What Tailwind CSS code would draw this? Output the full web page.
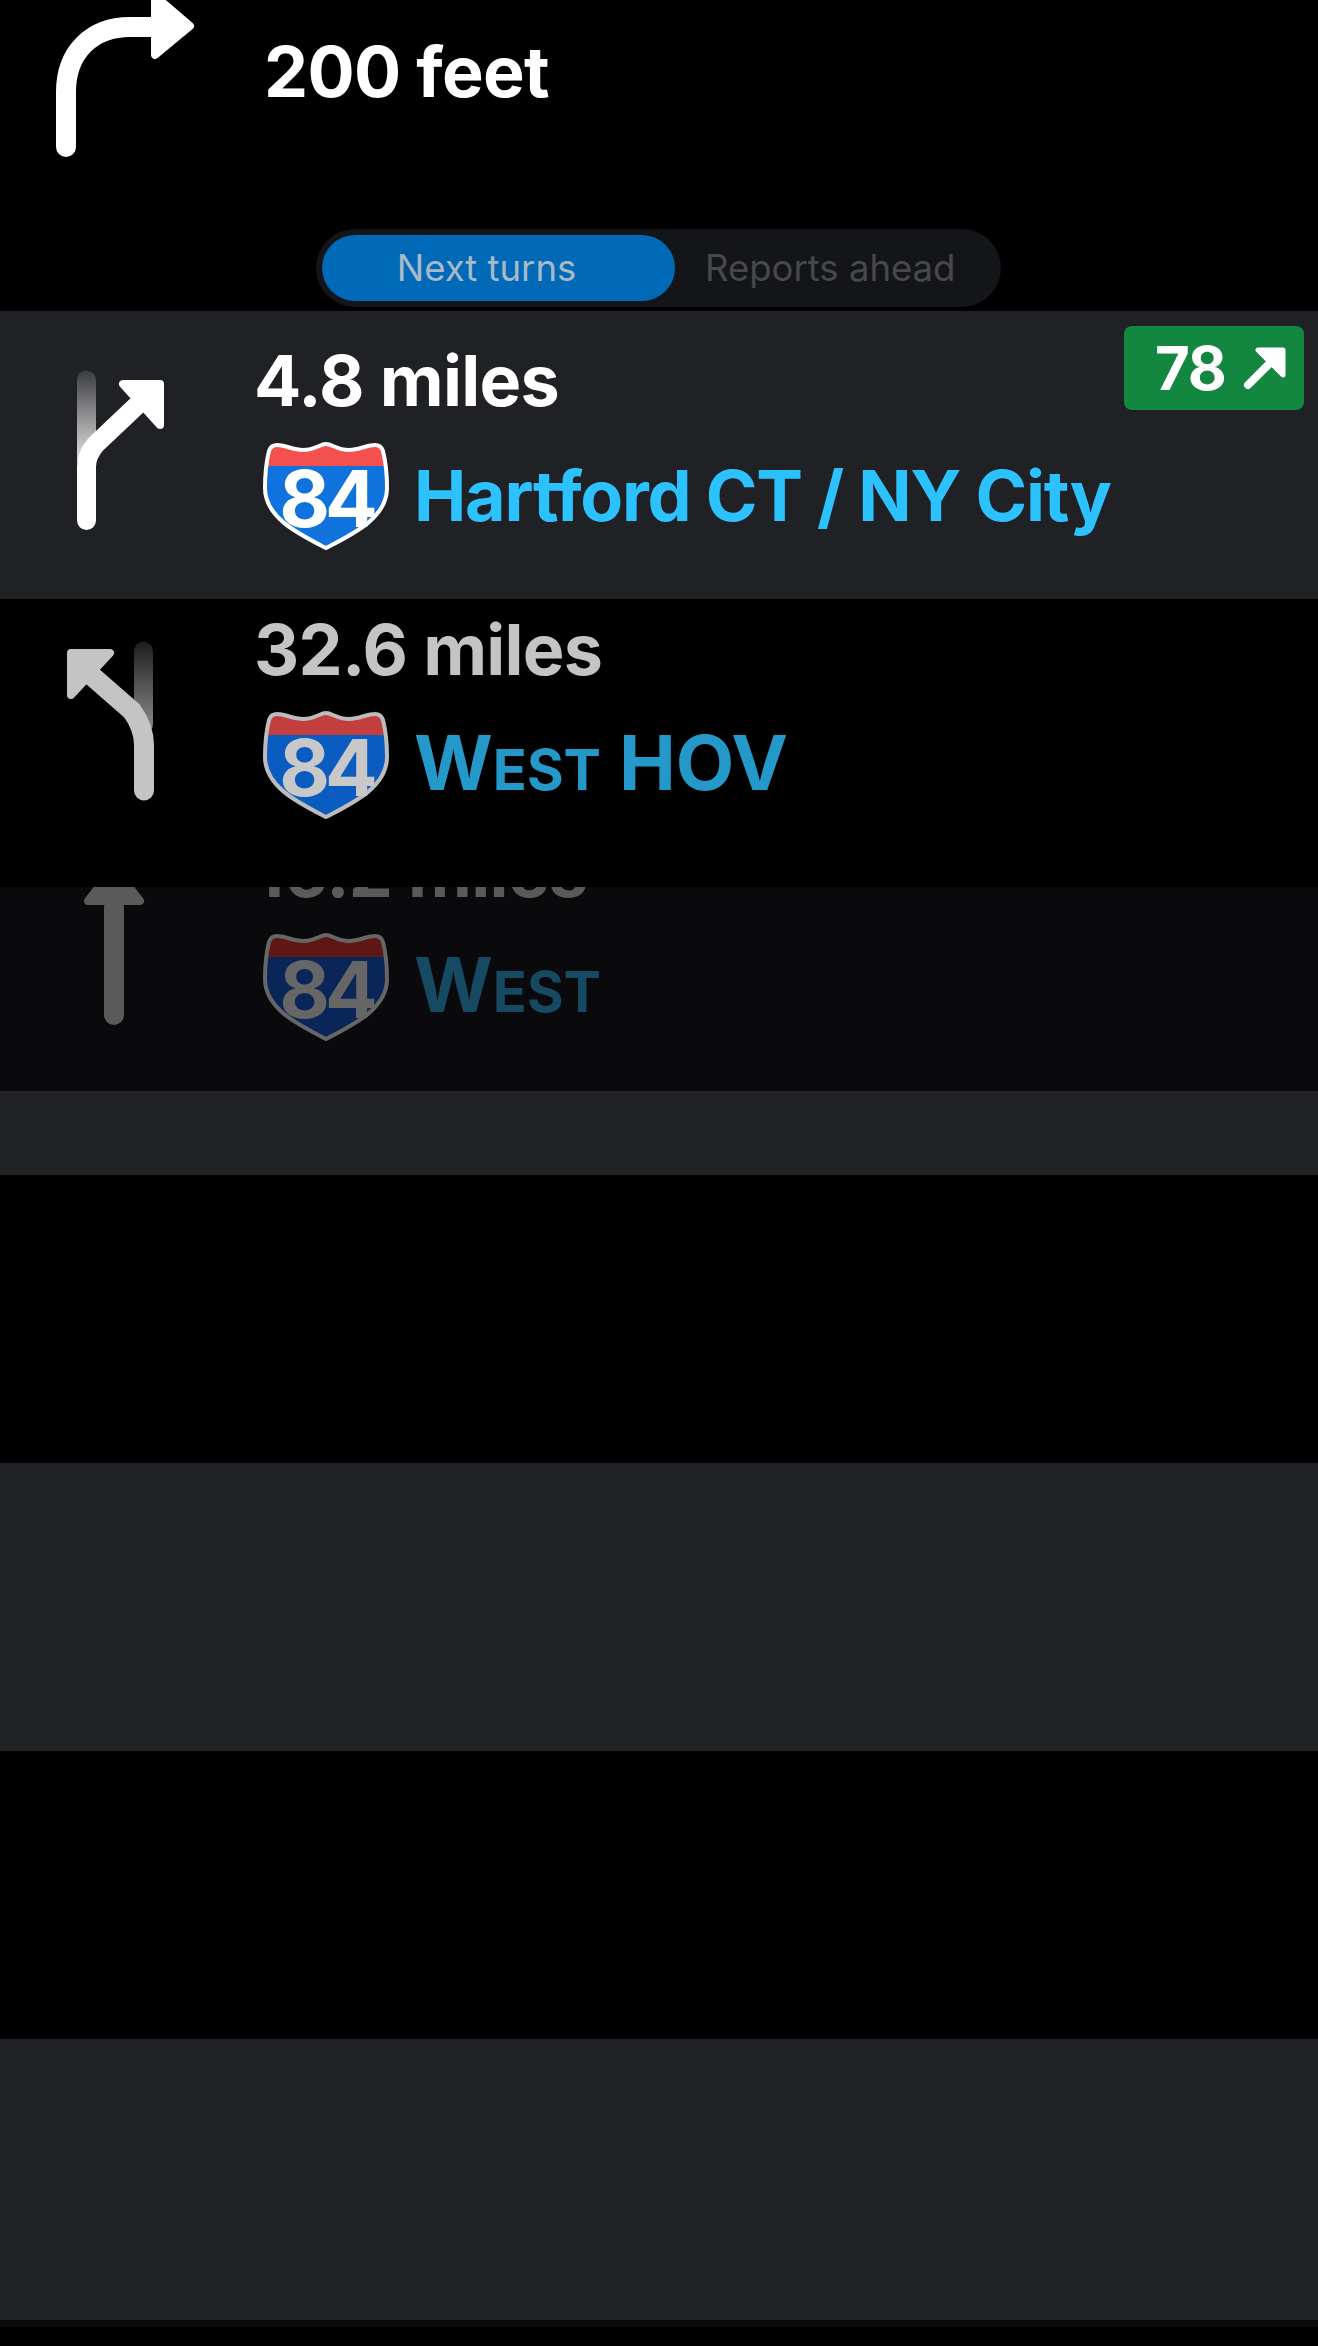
<!DOCTYPE html>
<html lang="en">

<head>
    <meta charset="UTF-8">
    <meta name="viewport" content="width=device-width, initial-scale=1.0">
    <script src="https://cdn.jsdelivr.net/npm/@tailwindcss/browser@4"></script>
    <title>Next turns</title>
</head>

<body class="bg-black font-['Inter',sans-serif]">

    <!-- Current maneuver and tabs -->
    <header class="h-[311px] overflow-hidden">
        <div class="flex h-[229px]">
            <svg class="w-[264px] h-[229px] shrink-0" viewBox="0 0 264 229" fill="none">
                <path d="M66 147 V92 C66 52 92 27 130 27 H156" stroke="#fff" stroke-width="20" stroke-linecap="round" />
                <path d="M155 -4 L190 26 L155 55 Z" fill="#fff" stroke="#fff" stroke-width="8" stroke-linejoin="round" />
            </svg>
            <div class="h-[144px] leading-[144px] text-[70px] font-bold tracking-[-0.01em] text-white">200 feet</div>
        </div>
        <div class="flex items-center ml-[316px] w-[685px] h-[78px] px-[6px] rounded-full bg-[#141518]">
            <div class="w-[353px] h-[66px] pr-6 flex items-center justify-center rounded-full bg-[#0069b8] text-[36.500px] text-[#a9b9c6]">Next turns</div>
            <div class="pl-[30px] text-[36.500px] text-[#47484c]">Reports ahead</div>
        </div>
    </header>

    <!-- Turn 1 -->
    <section class="relative flex h-[288px] overflow-hidden bg-[#202125]">
        <svg class="w-[254px] h-[288px] shrink-0" viewBox="0 0 254 288" fill="none">
            <defs>
                <linearGradient id="fade1" x1="0" y1="59" x2="0" y2="140" gradientUnits="userSpaceOnUse">
                    <stop offset="0" stop-color="#3a3b3e" />
                    <stop offset="1" stop-color="#d0d0d0" />
                </linearGradient>
                <linearGradient id="fade2" x1="0" y1="42" x2="0" y2="130" gradientUnits="userSpaceOnUse">
                    <stop offset="0" stop-color="#1c1c1c" />
                    <stop offset="1" stop-color="#8a8a8a" />
                </linearGradient>
                <clipPath id="band">
                    <rect x="0" y="0" width="126" height="24" />
                </clipPath>
            </defs>
            <path d="M86.500 69 V150" stroke="url(#fade1)" stroke-width="19" stroke-linecap="round" />
            <path d="M86.500 209.500 V156 Q86.500 144 96 133 L150 82" stroke="#fff" stroke-width="19" stroke-linecap="round" />
            <path d="M123 73 H160 V114 Z" fill="#fff" stroke="#fff" stroke-width="8" stroke-linejoin="round" />
        </svg>
        <div class="min-w-0">
            <div class="mt-[30px] h-[80px] leading-[80px] text-[70px] font-bold tracking-[-0.01em] text-white">4.8 miles</div>
            <div class="flex items-center mt-[21px] ml-[9px]">
                <svg class="w-[126px] h-[108px] shrink-0" viewBox="0 0 126 108">
                    <path d="M63 2 C69 2 74 8 86 8 C96 8 104 3 112 3 Q118 3 120 9 C122 17 124 30 124 46 C124 76 90 92 63 106 C36 92 2 76 2 46 C2 30 4 17 6 9 Q8 3 14 3 C22 3 30 8 40 8 C52 8 57 2 63 2 Z" fill="#0f72dd" />
                    <path d="M63 2 C69 2 74 8 86 8 C96 8 104 3 112 3 Q118 3 120 9 C122 17 124 30 124 46 C124 76 90 92 63 106 C36 92 2 76 2 46 C2 30 4 17 6 9 Q8 3 14 3 C22 3 30 8 40 8 C52 8 57 2 63 2 Z" fill="#f4504f" clip-path="url(#band)" />
                    <path d="M63 2 C69 2 74 8 86 8 C96 8 104 3 112 3 Q118 3 120 9 C122 17 124 30 124 46 C124 76 90 92 63 106 C36 92 2 76 2 46 C2 30 4 17 6 9 Q8 3 14 3 C22 3 30 8 40 8 C52 8 57 2 63 2 Z" fill="none" stroke="#fff" stroke-width="4" />
                    <text x="63" y="85" text-anchor="middle" font-family="Inter" font-weight="700" font-size="78" letter-spacing="-5" fill="#fff">84</text>
                </svg>
                <div class="ml-[25px] text-[70px] leading-[80px] font-bold tracking-[-0.018em] whitespace-nowrap text-[#2cc1ff]">Hartford CT / NY City</div>
            </div>
        </div>
        <div class="absolute top-[15px] right-[14px] flex items-center w-[180px] h-[84px] pl-[31px] rounded-lg bg-[#138640]">
            <span class="text-[60px] leading-none font-bold tracking-[-0.02em] text-white">78</span>
            <svg class="w-[44px] h-[44px] ml-[17px]" viewBox="0 0 44 44" fill="none">
                <path d="M5 39 L32 12" stroke="#fff" stroke-width="8" stroke-linecap="round" />
                <path d="M15 4 H40 V29 Z" fill="#fff" stroke="#fff" stroke-width="5" stroke-linejoin="round" />
            </svg>
        </div>
    </section>

    <!-- Turn 2 -->
    <section class="flex h-[288px] overflow-hidden bg-black">
        <svg class="w-[254px] h-[288px] shrink-0" viewBox="0 0 254 288" fill="none">
            <path d="M143.500 52 V125" stroke="url(#fade2)" stroke-width="19" stroke-linecap="round" />
            <path d="M144 191.500 V146 Q144 129 132 112 L84 70" stroke="#c4c4c4" stroke-width="20" stroke-linecap="round" />
            <path d="M110 54 H71 V96 Z" fill="#c4c4c4" stroke="#c4c4c4" stroke-width="8" stroke-linejoin="round" />
        </svg>
        <div class="min-w-0">
            <div class="mt-[11px] h-[80px] leading-[80px] text-[70px] font-bold tracking-[-0.01em] text-[#c4c4c4]">32.6 miles</div>
            <div class="flex items-center mt-[21px] ml-[9px]">
                <svg class="w-[126px] h-[108px] shrink-0" viewBox="0 0 126 108">
                    <path d="M63 2 C69 2 74 8 86 8 C96 8 104 3 112 3 Q118 3 120 9 C122 17 124 30 124 46 C124 76 90 92 63 106 C36 92 2 76 2 46 C2 30 4 17 6 9 Q8 3 14 3 C22 3 30 8 40 8 C52 8 57 2 63 2 Z" fill="#0b5cc0" />
                    <path d="M63 2 C69 2 74 8 86 8 C96 8 104 3 112 3 Q118 3 120 9 C122 17 124 30 124 46 C124 76 90 92 63 106 C36 92 2 76 2 46 C2 30 4 17 6 9 Q8 3 14 3 C22 3 30 8 40 8 C52 8 57 2 63 2 Z" fill="#c33f3f" clip-path="url(#band)" />
                    <path d="M63 2 C69 2 74 8 86 8 C96 8 104 3 112 3 Q118 3 120 9 C122 17 124 30 124 46 C124 76 90 92 63 106 C36 92 2 76 2 46 C2 30 4 17 6 9 Q8 3 14 3 C22 3 30 8 40 8 C52 8 57 2 63 2 Z" fill="none" stroke="#bcbcbc" stroke-width="4" />
                    <text x="63" y="85" text-anchor="middle" font-family="Inter" font-weight="700" font-size="78" letter-spacing="-5" fill="#c8c8c8">84</text>
                </svg>
                <div class="ml-[25px] pt-[2px] text-[76px] leading-[80px] font-bold whitespace-nowrap text-[#2398c9]">W<span class="text-[56px] uppercase">est</span> HOV</div>
            </div>
        </div>
    </section>

    <!-- Turn 3, sliding under turn 2 -->
    <section class="flex h-[204px] overflow-hidden bg-[#0a0a0c]">
        <svg class="w-[254px] h-[204px] shrink-0" viewBox="0 0 254 204" fill="none">
            <path d="M114 128 V20" stroke="#5a5a5a" stroke-width="20" stroke-linecap="round" />
            <path d="M114 -20 L140 14 H88 Z" fill="#5a5a5a" stroke="#5a5a5a" stroke-width="8" stroke-linejoin="round" />
        </svg>
        <div class="min-w-0">
            <div class="-mt-[55px] h-[80px] leading-[80px] text-[70px] font-bold tracking-[-0.01em] text-[#5a5a5a]">16.2 miles</div>
            <div class="flex items-center mt-[21px] ml-[9px]">
                <svg class="w-[126px] h-[108px] shrink-0" viewBox="0 0 126 108">
                    <path d="M63 2 C69 2 74 8 86 8 C96 8 104 3 112 3 Q118 3 120 9 C122 17 124 30 124 46 C124 76 90 92 63 106 C36 92 2 76 2 46 C2 30 4 17 6 9 Q8 3 14 3 C22 3 30 8 40 8 C52 8 57 2 63 2 Z" fill="#0a2658" />
                    <path d="M63 2 C69 2 74 8 86 8 C96 8 104 3 112 3 Q118 3 120 9 C122 17 124 30 124 46 C124 76 90 92 63 106 C36 92 2 76 2 46 C2 30 4 17 6 9 Q8 3 14 3 C22 3 30 8 40 8 C52 8 57 2 63 2 Z" fill="#5e1714" clip-path="url(#band)" />
                    <path d="M63 2 C69 2 74 8 86 8 C96 8 104 3 112 3 Q118 3 120 9 C122 17 124 30 124 46 C124 76 90 92 63 106 C36 92 2 76 2 46 C2 30 4 17 6 9 Q8 3 14 3 C22 3 30 8 40 8 C52 8 57 2 63 2 Z" fill="none" stroke="#666" stroke-width="4" />
                    <text x="63" y="85" text-anchor="middle" font-family="Inter" font-weight="700" font-size="78" letter-spacing="-5" fill="#666">84</text>
                </svg>
                <div class="ml-[25px] pt-[2px] text-[76px] leading-[80px] font-bold whitespace-nowrap text-[#154a62]">W<span class="text-[56px] uppercase">est</span></div>
            </div>
        </div>
    </section>

    <!-- Empty rows -->
    <div class="h-[84px] bg-[#202226]"></div>
    <div class="h-[288px] bg-black"></div>
    <div class="h-[288px] bg-[#202226]"></div>
    <div class="h-[288px] bg-black"></div>
    <div class="h-[281px] bg-[#202226]"></div>
    <div class="h-[7px] bg-[#0a0a0c]"></div>

</body>

</html>
